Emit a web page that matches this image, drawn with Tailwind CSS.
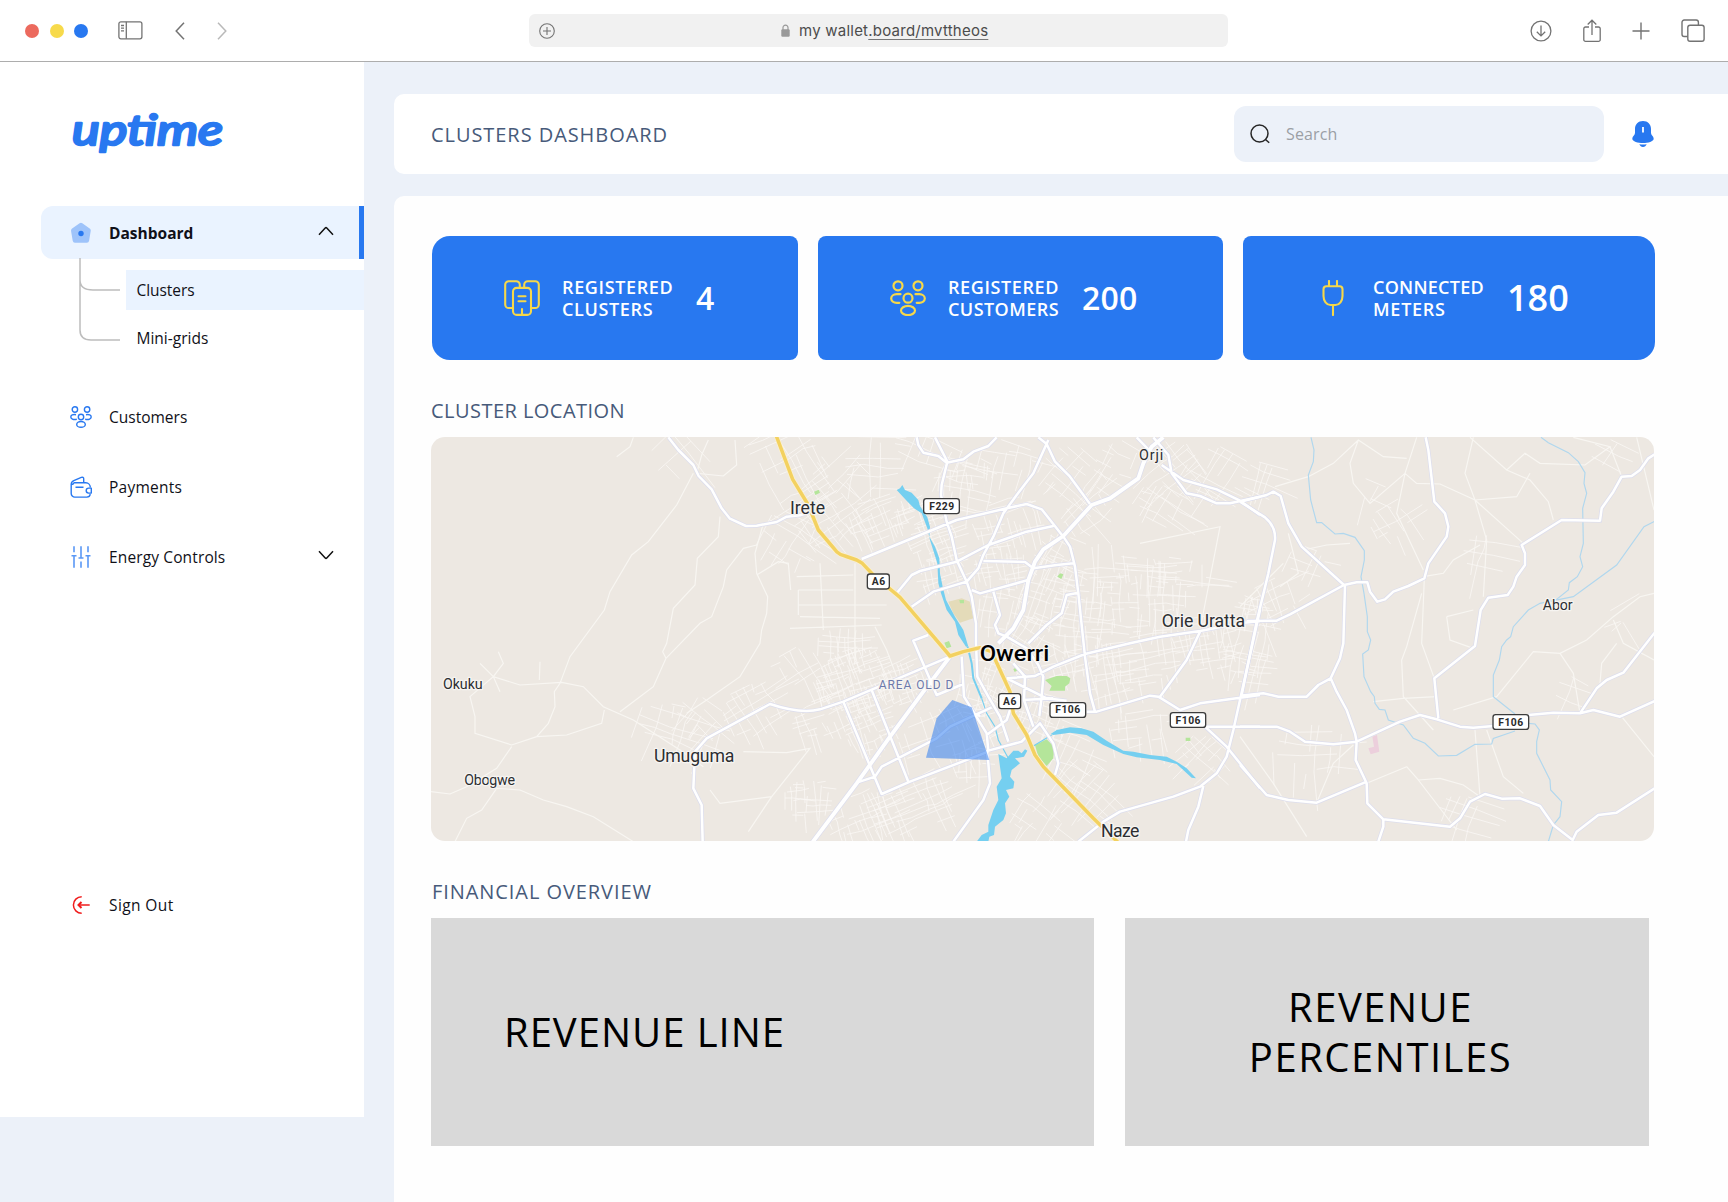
<!DOCTYPE html>
<html lang="en">
<head>
<meta charset="utf-8">
<title>Uptime – Clusters Dashboard</title>
<script src="https://cdn.jsdelivr.net/npm/@tailwindcss/browser@4"></script>
</head>
<body class="w-[1728px] h-[1202px] overflow-hidden flex flex-col bg-[#ecf1f9] font-['Open_Sans',sans-serif] text-[#101018]">

<!-- Browser toolbar -->
<header class="h-[62px] shrink-0 bg-white border-b border-[#adadad] flex items-center pl-[25px] pr-[23px] text-[#737373]">
  <div class="w-[504px] flex items-center">
    <span class="size-3.5 rounded-full bg-[#ec6a5e]"></span>
    <span class="size-3.5 rounded-full bg-[#f7da4b] ml-[10.5px]"></span>
    <span class="size-3.5 rounded-full bg-[#2878f0] ml-[10.5px]"></span>
    <svg class="ml-[30px]" width="25" height="19" viewBox="0 0 25 19" fill="none" stroke="currentColor" stroke-width="1.3"><rect x=".9" y=".8" width="23" height="17" rx="2"/><path d="M8.3.8v17M3 4.5h3M3 7.2h3M3 9.9h3"/></svg>
    <svg class="ml-8" width="10" height="18" viewBox="0 0 10 18" fill="none" stroke="currentColor" stroke-width="1.5"><path d="M9 .7 1.2 9 9 17.3"/></svg>
    <svg class="ml-8 text-[#b9b9b9]" width="10" height="18" viewBox="0 0 10 18" fill="none" stroke="currentColor" stroke-width="1.5"><path d="M1 .7 8.8 9 1 17.3"/></svg>
  </div>
  <div class="w-[699px] h-[33px] rounded-md bg-[#f1f1f1] flex items-center">
    <svg class="ml-2.5" width="16" height="16" viewBox="0 0 16 16" fill="none" stroke="currentColor" stroke-width="1.1"><circle cx="8" cy="8" r="7.3"/><path d="M8 4v8M4 8h8"/></svg>
    <svg class="ml-[226px]" width="9" height="13" viewBox="0 0 9 13"><rect x=".3" y="5.3" width="8.4" height="7.4" rx="1.2" fill="#999"/><path d="M2 6V3.6a2.5 2.5 0 0 1 5 0V6" fill="none" stroke="#999" stroke-width="1.2"/></svg>
    <span class="ml-[9px] font-[Inter,sans-serif] text-[15px] leading-5 tracking-[.23px] text-[#4c4c4c] whitespace-nowrap">my wallet<span class="underline underline-offset-[3px] decoration-[#777]">.board/mvttheos</span></span>
  </div>
  <div class="flex-1 flex items-center justify-end">
    <svg width="22" height="22" viewBox="0 0 22 22" fill="none" stroke="currentColor" stroke-width="1.3"><circle cx="11" cy="11" r="9.9"/><path d="M11 5.5v10.3M6.8 11.7l4.2 4.2 4.2-4.2"/></svg>
    <svg class="ml-[31px]" width="18" height="24" viewBox="0 0 18 24" fill="none" stroke="currentColor" stroke-width="1.3"><path d="M6 8H2.5A1.7 1.7 0 0 0 .8 9.700v11a1.700 1.700 0 0 0 1.700 1.700h13a1.700 1.700 0 0 0 1.700-1.700v-11A1.700 1.700 0 0 0 15.500 8H12M9 16V1.500M4.700 5.500 9 1.200l4.300 4.300"/></svg>
    <svg class="ml-[31px]" width="18" height="18" viewBox="0 0 18 18" fill="none" stroke="currentColor" stroke-width="1.4"><path d="M9 .5v17M.5 9h17"/></svg>
    <svg class="ml-[31px]" width="24" height="24" viewBox="0 0 24 24" fill="none" stroke="currentColor" stroke-width="1.4"><rect x="6.800" y="6.300" width="16.300" height="16" rx="2.200"/><path d="M6.800 17.500H3.200A2.200 2.200 0 0 1 1 15.300V3.200A2.200 2.200 0 0 1 3.200 1h12a2.200 2.200 0 0 1 2.200 2.200v3.100"/></svg>
  </div>
</header>

<div class="flex flex-1 min-h-0">
  <!-- Sidebar -->
  <aside class="w-[364px] h-[1055px] shrink-0 bg-white flex flex-col text-[15.5px] leading-6">
    <div class="h-36 pl-[66px] pt-8">
      <svg width="170" height="80" viewBox="0 0 170 80"><text x="6" y="51" textLength="151" lengthAdjust="spacingAndGlyphs" font-family="Lato, sans-serif" font-style="italic" font-weight="400" font-size="43" fill="#2878f0" stroke="#2878f0" stroke-width="2.600" stroke-linejoin="round" stroke-linecap="round">uptime</text></svg>
    </div>

    <a class="ml-[41px] h-[53px] rounded-l-xl bg-[#eaf3ff] border-r-[5px] border-[#2878f0] flex items-center pl-[29px] pr-[25px] font-bold">
      <svg width="22" height="22" viewBox="0 0 22 22"><path d="M9.600 1.200a2.300 2.300 0 0 1 2.700 0l7.400 5.300c.9.600 1.200 1.600 1 2.600l-1.600 9.700a2.300 2.300 0 0 1-2.300 1.900H5a2.300 2.300 0 0 1-2.300-1.900L1.100 9.200c-.2-1 .2-2 1-2.600z" fill="#9ec3fa"/><circle cx="11" cy="11.500" r="2.700" fill="#2878f0"/></svg>
      <span class="ml-[17px]">Dashboard</span>
      <svg class="ml-auto -mt-1" width="16" height="10" viewBox="0 0 16 10" fill="none" stroke="#111" stroke-width="1.500"><path d="M1 8.700 7.200 2q.8-.8 1.600 0L15 8.700"/></svg>
    </a>
    <div class="relative pt-[11px] flex flex-col">
      <svg class="absolute left-[79px] -top-1" width="42" height="90" viewBox="0 0 42 90" fill="none" stroke="#bdbdbd" stroke-width="1.500"><path d="M1 3v72q0 10 11 10h29M1 25q0 10 13 10h27"/></svg>
      <a class="ml-[126px] h-10 bg-[#eaf3ff] flex items-center pl-[10.5px] tracking-[-.05px]">Clusters</a>
      <a class="ml-[126px] mt-2 h-10 flex items-center pl-[10.5px]">Mini-grids</a>
    </div>

    <a class="mt-[31px] h-14 flex items-center pl-[70px]">
      <svg width="22" height="22" viewBox="0 0 22 22" fill="none" stroke="#2878f0" stroke-width="1.400"><circle cx="4.900" cy="3.500" r="2.700"/><circle cx="17.100" cy="3.500" r="2.700"/><circle cx="11" cy="11" r="2.700"/><ellipse cx="11" cy="18.400" rx="4.300" ry="2.900"/><path d="M6 8.700C3 8 .8 9.300.8 11s2.200 3 6 2.300M16 8.700c3-.7 5.200.6 5.200 2.300s-2.200 3-6 2.300"/></svg>
      <span class="ml-[17px]">Customers</span>
    </a>
    <a class="mt-3.5 h-14 flex items-center pl-[70px]">
      <svg width="22" height="22" viewBox="0 0 22 22" fill="none" stroke="#2878f0" stroke-width="1.400" stroke-linejoin="round"><path d="M1.200 8.500v9a3.600 3.600 0 0 0 3.600 3.600h12a3.600 3.600 0 0 0 3.500-3M20.300 11.300a4.500 4.500 0 0 0-4.400-4.500H4A2.700 2.700 0 0 1 1.200 8.500c0-2.500 1-3.200 2.600-3.900L11.300 1.400c1.300-.5 2.400 0 2.400 1.300v4M21.300 12.100h-2.600a2.300 2.300 0 0 0 0 5h2.600zM5.500 11.200h8"/></svg>
      <span class="ml-[17px] tracking-[.25px]">Payments</span>
    </a>
    <a class="mt-3.5 h-14 flex items-center pl-[70px] pr-[30px]">
      <svg width="22" height="22" viewBox="0 0 22 22" fill="none" stroke="#5a98f5" stroke-width="1.600"><path d="M4 .3v6M4 10v11.700M1.500 9.800h5M11 .3v11.400M11 15.500v6.200M8.500 12h5M18 .3v6M18 10v11.700M15.500 9.800h5"/></svg>
      <span class="ml-[17px] tracking-[.13px]">Energy Controls</span>
      <svg class="ml-auto -mt-1" width="16" height="10" viewBox="0 0 16 10" fill="none" stroke="#111" stroke-width="1.500"><path d="M1 1.300 7.200 8q.8.800 1.600 0L15 1.300"/></svg>
    </a>
    <a class="mt-[292px] h-14 flex items-center pl-[70px]">
      <svg width="22" height="22" viewBox="0 0 22 22" fill="none" stroke="#f01c1c" stroke-width="1.500"><path d="M11.700 2.700a8.300 8.300 0 1 0 0 16.600M19.700 11H9"/><path d="m11.500 8-3 3 3 3" stroke-width="2"/></svg>
      <span class="ml-[17px] tracking-[.4px]">Sign Out</span>
    </a>
  </aside>

  <!-- Content -->
  <main class="flex-1 min-w-0 pl-[30px] pt-8 flex flex-col">
    <div class="h-20 shrink-0 rounded-l-[10px] bg-white flex items-center pl-[37px]">
      <h1 class="pt-px text-xl tracking-[.94px] text-[#475a7a]">CLUSTERS DASHBOARD</h1>
      <label class="ml-auto w-[370px] h-14 rounded-xl bg-[#ecf1f9] flex items-center pl-4 text-base text-[#9b9fa5]">
        <svg width="20" height="20" viewBox="0 0 20 20" fill="none" stroke="#262626" stroke-width="1.500"><circle cx="9.500" cy="9.500" r="8.500"/><path d="m15.500 15.500 3.700 3.300"/></svg>
        <span class="ml-4 tracking-[.15px]">Search</span>
      </label>
      <svg class="ml-7 mr-[74px]" width="22" height="26" viewBox="0 0 22 26"><path d="M11 0c4.800 0 8 3.500 8 8v4c0 2 2.700 3.200 2.700 5.700C21.700 20.500 16 22 11 22S.3 20.500.3 17.700C.3 15.200 3 14 3 12V8c0-4.500 3.200-8 8-8zM7.300 23.300q3.700.5 7.400 0C14 24.800 12.700 26 11 26s-3-1.200-3.700-2.700z" fill="#2878f0"/><path d="M11 6v5.500" stroke="#fff" stroke-width="1.800"/></svg>
    </div>

    <section class="mt-[22px] flex-1 rounded-tl-[10px] bg-[#fefefe] pl-[37px] pt-10">
      <div class="flex gap-5 ml-px text-white font-semibold">
        <div class="w-[366px] h-[124px] rounded-lg rounded-l-[18px] bg-[#2878f0] flex items-center pl-[72px]">
          <svg width="36" height="36" viewBox="0 0 36 36" fill="none" stroke="#f6d84a" stroke-width="2.100" stroke-linecap="round"><path d="M8.500 28H4.800A3.600 3.600 0 0 1 1.200 24.400V4.800A3.600 3.600 0 0 1 4.800 1.200h7.400a3.600 3.600 0 0 1 3.600 3.600v2.900M27.500 28h3.700a3.600 3.600 0 0 0 3.600-3.600V4.800a3.600 3.600 0 0 0-3.600-3.600h-7.400a3.600 3.600 0 0 0-3.600 3.600v2.900"/><rect x="9" y="7.900" width="18" height="27" rx="3.600"/><path d="M14.500 16.300h7M14.500 21.300h7M18 29v5.500"/></svg>
          <p class="ml-[22px] w-[112px] text-lg leading-[22px] tracking-[.64px]">REGISTERED<br>CLUSTERS</p>
          <span class="ml-[22px] text-[32px]">4</span>
        </div>
        <div class="w-[405px] h-[124px] rounded-lg bg-[#2878f0] flex items-center pl-[72px]">
          <svg width="36" height="36" viewBox="0 0 36 36" fill="none" stroke="#f6d84a" stroke-width="2.200" stroke-linecap="round"><circle cx="8" cy="5.800" r="4.500"/><circle cx="28" cy="5.800" r="4.500"/><circle cx="18" cy="18.200" r="4.500"/><ellipse cx="18" cy="30.500" rx="7" ry="4.600"/><path d="M10.500 14.200H6.700c-3.400 0-5.500 2-5.500 4.400s2.500 4.200 5.500 4.200h2.600M25.500 14.200h3.800c3.400 0 5.500 2 5.500 4.400s-2.500 4.200-5.500 4.200h-2.600"/></svg>
          <p class="ml-[22px] w-[112px] text-lg leading-[22px] tracking-[.6px]">REGISTERED<br><span class="tracking-[.44px]">CUSTOMERS</span></p>
          <span class="ml-[22px] text-[32px] tracking-[.25px]">200</span>
        </div>
        <div class="w-[412px] h-[124px] rounded-lg rounded-r-[18px] bg-[#2878f0] flex items-center pl-[72px]">
          <svg width="36" height="36" viewBox="0 0 36 36" fill="none" stroke="#f6d84a" stroke-width="2.100" stroke-linecap="round"><path d="M14 1v5M22 1v5M18 25v10"/><path d="M11.500 6.200h13a3 3 0 0 1 3 3V16c0 5-3 9-7 9h-5c-4 0-7-4-7-9V9.200a3 3 0 0 1 3-3z"/></svg>
          <p class="ml-[22px] w-[112px] text-lg leading-[22px] tracking-[.26px]">CONNECTED<br><span class="tracking-[.75px]">METERS</span></p>
          <span class="ml-[22px] text-[36px]">180</span>
        </div>
      </div>

      <h2 class="mt-[37px] h-7 leading-7 text-xl tracking-[.46px] text-[#475a7a]">CLUSTER LOCATION</h2>

      <!-- Map; shapes are drawn on a triple-resolution canvas -->
      <svg id="map" class="mt-3 w-[1223px] h-[404px] rounded-[14px] bg-[#ede8e2]" viewBox="33 21 3669 1212">
        <defs>
          <g id="roads">
            <path d="M745 22 775 60 820 105 836 138 875 178 905 235 930 266 978 288 1010 287 1070 276 1100 260 1140 256 1175 245M1590 680 1270 815 1200 838C1160 848 1110 842 1050 822L860 925 825 965 820 1075 845 1125 848 1235"/>
            <g transform="translate(1260)"><path d="M10 815 125 1092 210 1055 445 965M95 780 205 1055M50 1058 105 1040 125 1010 290 925 330 890 455 832M265 615 220 632 290 795 370 762M285 22 322 95 305 165 303 195 320 275 335 320 350 390 380 455 395 500 408 580 408 640 412 740 445 800 480 860 505 935M230 22 235 45 250 68 295 78 320 98 370 88 400 65 445 48 470 22M65 387 350 270 500 235 560 222 605 238 670 320 690 350 705 410 715 490 735 680 750 790 765 845M170 490 215 435 240 423 350 395 445 345 560 305 640 288M215 530 280 485 380 455 415 415 430 375 460 320 490 250 530 195 580 130 625 30M595 22 620 42 645 95 690 140 750 222M430 393 555 396 580 415 650 405 700 400M395 480 420 490 565 450M460 485 480 555 465 585 475 610 500 620 560 655 595 705 610 740 605 800 598 858M565 640 620 585 665 550 680 495 715 488M500 745 585 738 640 710 735 672 870 640 960 620 1080 603 1200 580 1260 573M1080 605 1040 690 960 800M740 845 770 845 930 797 955 800 1020 840 1080 820 1260 795M940 22 985 75 995 130 1040 190 1080 198 1130 220 1170 220 1260 200M965 105 1030 150 1130 178 1200 212 1260 255M1095 890 1160 950 1260 1075M1095 890H1260M890 22 925 58M1260 540 1220 720 1180 900 1160 980 1130 1030 1080 1070 1000 1100 840 1145 790 1175 715 1235M1090 1068 1075 1130 1045 1200 1038 1235M440 960 445 1000 450 1060 430 1110 340 1235M365 680 372 800 440 910 445 962 545 935 600 880 640 940 655 1000 645 1035M500 745 620 805 680 812M550 810 640 805M440 915 500 870 510 840M520 700 555 740 552 810 580 890M420 860 410 850"/></g>
            <g transform="translate(2460)"><path d="M0 215 80 195 100 185 122 198 145 280 185 350 312 465 350 457 382 457 390 485 412 515 435 508 460 485 505 468 553 445 565 400 620 320 625 290 615 250 583 215 565 60 557 22M0 215 75 262Q108 290 105 330L85 430 50 575 5 795M20 573 110 572 150 553 312 465M315 465 310 640 300 685 272 745 290 785 320 840 345 910 350 935 347 990 380 1060 382 1120 430 1168 430 1190 415 1235M0 797 70 790 115 800 200 800 235 765 272 745M0 890H110L150 905 195 935 280 943 350 935 480 875 540 855 590 868 660 890 700 893 760 888M595 865 583 745 705 648 722 540 745 503 803 495 820 470 830 440 855 405 855 370 845 345 965 270 1080 272 1085 235 1120 185 1145 140 1175 138 1200 120 1225 85 1244 73M865 855 940 848 1020 850 1060 840 1140 860 1244 813M1020 850 1070 775 1100 750 1150 728 1244 608M0 1005 80 1095 145 1110 230 1118 375 1057M430 1168 630 1190 660 1165 690 1115 735 1092 785 1106 840 1105 900 1128 940 1185 998 1230 1010 1205 1075 1155 1130 1148 1244 1075"/></g>
          </g>
          <g id="avenues"><path d="M1175 1240 1310 1060 1410 920 1510 785 1590 680M2230 22 2195 50 2170 100 2155 145 2070 205 2015 225 1930 318 1870 358 1845 395 1825 450 1810 540 1780 595 1735 640"/></g>
        </defs>
        <!-- Streets -->
        <g id="streets" fill="none" stroke="#faf8f5" stroke-width="3" stroke-opacity=".8"></g>
        <g fill="none" stroke="#f8f6f2" stroke-width="3.500">
          <path d="M820 130 770 225 685 335 635 375 570 485 553 540 450 680 420 760 403 785 405 830 385 880 350 920 275 945 165 910 165 860 150 800 220 740 300 765 425 757 490 770 550 830 640 870 780 960 850 1010M350 920 440 915 545 880 553 840M865 30 845 75 830 130 910 138 950 105 945 30M900 260 895 320 832 385 825 465 760 535 740 640 728 665 738 685 840 580 875 560 910 470 920 420 970 355 1010 345M738 685 700 770 640 815 600 845M1030 280 1005 370 1010 430 1043 500 1040 550 1025 600 1020 640 960 740 860 810 800 850M1010 435 1075 395 1105 400 1112 480M1130 440 1300 435M1135 480H1300M1135 525H1400M1140 560 1380 565M1135 480V555M1110 595 1385 585M1200 400 1210 600M1305 400V690M1365 590 1400 660 1430 740M33 1085 90 1092 140 1070 230 1015 275 950M230 1075 300 1080 370 1110 440 1130 520 1160 640 1235M230 1075 185 1140 140 1165 105 1235M640 22 630 50 590 80M180 700 220 740M235 665 250 700 220 740 240 785M360 695 358 750M970 965 1100 968 1170 955 1055 1100 900 1120 870 1080M1055 1100 985 1205"/>
          <g transform="translate(2460)"><path d="M0 530 130 400M-300 340-60 290-120 600M105 170 205 140 280 100 355 30 400 60 430 80 500 85M530 22 495 130 470 250 550 420M495 130 530 160 600 162 705 210 850 340M700 22 675 130 705 210 740 330 730 500M690 22 800 120 855 70 900 100 1035 105 1110 50 1000 22M1110 50 1145 140M800 120 870 150 925 215 940 270M705 210 830 200 870 130M355 30 330 100 340 160 390 220 495 130M553 445 545 640 583 745M545 490 500 650 485 690 490 800 580 900M550 440 610 430 640 390 720 345M1242 490 1200 500 1120 560 1040 630 960 670 880 665 770 800 640 840M1120 570 1150 640 1242 690M1130 640 1085 700 1080 760M960 670 1000 730 1020 850M1190 22 1242 240M400 815 490 805 590 800M500 1010 535 1050 600 1045 670 1065 720 1100 705 900M740 900 790 1040 850 1090M535 1050 650 1200M380 1060 500 1010M0 920 100 1060 200 1220M230 1118 280 1000 340 945M620 560 700 540M620 560 630 630 700 655M1145 860 1242 980M145 310 175 430 120 470M190 360 260 345 330 340"/></g>
        </g>
        <!-- Landcover -->
        <g transform="translate(1260)">
          <path d="M325 515 365 505 390 515 400 565 360 578 340 550Z" fill="#e4dbb9"/>
          <path d="M615 750 650 738H680L691 745 688 760 675 770V782H628L635 768ZM585 945 620 928 642 950 640 985 620 1008 595 980ZM652 440 660 430 670 433 664 447ZM358 510H372V520H360ZM313 638 327 633 334 650 320 655ZM-78 185-64 179-60 188-74 195ZM520 717 532 711 535 719 524 726ZM1037 923H1051V933H1037Z" fill="#b4e59a"/>
        </g>
        <path d="M2857 920 2871 915 2878 965 2852 973 2845 955 2862 950Z" fill="#eccfdc"/>
        <!-- Water -->
        <g transform="translate(2460)" fill="none" stroke="#b0d7ee" stroke-width="3.500">
          <path d="M213 22 222 60 220 95 205 135 212 210 230 278 245 278 285 312 310 310 345 322 373 362V390L363 440 372 490 382 560V605L392 630 385 660 368 672 372 740 392 785 403 800 405 820 418 838 435 840 445 870 490 885 520 925 555 940 595 978 650 976 705 943 755 942 760 925 825 903M903 22 925 38 985 68 1015 95 1035 128 1032 160 1040 190 1028 235 1030 340 1020 380 1028 410 1012 440 988 458 985 480 945 512M1244 274 1212 290 1130 405 1000 500 900 520 865 540 820 590 812 620 800 630 785 650 778 690 760 735V800L825 852M865 880 885 882 898 900 890 935V970L930 1050 932 1080 965 1115 960 1160 940 1185 925 1235"/>
        </g>
        <g transform="translate(1260)" fill="#75cff0">
          <path d="M170 180 180 175 187 165 195 180 215 188 235 210 240 228 262 262 270 290 268 320 285 350 298 385 300 430 308 470 318 510 345 560 370 600 385 650H378L355 615 345 575 320 540 303 490 295 460 292 400 270 330 262 295 245 250 222 235 200 212ZM475 972 500 985 520 962 535 962 545 970 555 958 562 962 552 980 525 985 540 1000 515 1020 510 1040 523 1055 520 1075 498 1080 508 1100 495 1120 498 1150 490 1170 465 1190 462 1215 448 1220 445 1235H410L425 1215 445 1205V1185L460 1140 475 1110 470 1070 485 1045 480 1010ZM632 912 650 900 690 892 725 895 760 905 800 932 850 962 880 965 930 975 980 980 1010 995 1040 1015 1068 1045 1055 1043 1010 1002 960 990 890 982 850 972 790 945 740 915 690 908 640 915Z"/>
          <path d="M383 650 395 700 400 745 425 805" fill="none" stroke="#75cff0" stroke-width="6"/>
          <path d="M425 805 440 850 465 890 475 930 505 985M580 948 635 915" fill="none" stroke="#75cff0" stroke-width="3.500"/>
        </g>
        <!-- Roads -->
        <use href="#roads" fill="none" stroke="#dddeed" stroke-width="12"/>
        <use href="#avenues" fill="none" stroke="#dddeed" stroke-width="16"/>
        <use href="#roads" fill="none" stroke="#fff" stroke-width="7.500" stroke-linejoin="round"/>
        <use href="#avenues" fill="none" stroke="#fff" stroke-width="11.500" stroke-linejoin="round"/>
        <path d="M1069 18 1118 148 1165 225 1195 300 1250 365Q1262 376 1275 378L1310 390 1327 400 1360 435 1440 502 1590 678 1630 665 1680 653 1715 665 1770 785 1780 850 1820 915 1845 975 1870 1010 2020 1165 2095 1238" fill="none" stroke="#fbf0cf" stroke-width="15"/>
        <path d="M1069 18 1118 148 1165 225 1195 300 1250 365Q1262 376 1275 378L1310 390 1327 400 1360 435 1440 502 1590 678 1630 665 1680 653 1715 665 1770 785 1780 850 1820 915 1845 975 1870 1010 2020 1165 2095 1238" fill="none" stroke="#f3d160" stroke-width="10.500" stroke-linejoin="round"/>
        <path d="M1597 810 1655 832 1708 990 1518 983 1550 865Z" fill="#2878f0" fill-opacity=".52"/>
        <!-- Place names -->
        <g font-family="Roboto, sans-serif" fill="#2c2e31" stroke="#f6f4f1" stroke-width="8" stroke-linejoin="round" paint-order="stroke">
          <g font-size="53"><text x="1110" y="252" textLength="105">Irete</text><text x="702" y="997" textLength="241">Umuguma</text><text x="2225" y="590" textLength="250">Orie Uratta</text><text x="2043" y="1220" textLength="115">Naze</text></g>
          <g font-size="43"><text x="69" y="776" textLength="119">Okuku</text><text x="133" y="1064" textLength="152">Obogwe</text><text x="2157" y="91" textLength="73">Orji</text><text x="3368" y="540" textLength="90">Abor</text></g>
          <text x="1376" y="777" textLength="224" font-size="36" fill="#6d79ab">AREA OLD D</text>
          <text x="1679" y="692" textLength="209" font-size="68" font-weight="500" fill="#000" lengthAdjust="spacingAndGlyphs">Owerri</text>
        </g>
        <!-- Route shields -->
        <g fill="#fff" stroke="#3c3c3c" stroke-width="4">
          <rect x="1342" y="432" width="66" height="45" rx="8"/><rect x="1511" y="206" width="107" height="45" rx="8"/><rect x="1736" y="791" width="66" height="45" rx="8"/><rect x="1890" y="818" width="107" height="44" rx="8"/><rect x="2251" y="848" width="106" height="44" rx="8"/><rect x="3219" y="854" width="107" height="44" rx="8"/>
        </g>
        <g font-family="Roboto, sans-serif" font-weight="700" font-size="31" fill="#2a2a2a" text-anchor="middle" letter-spacing="1.500">
          <text x="1376" y="465">A6</text><text x="1566" y="239">F229</text><text x="1770" y="824">A6</text><text x="1944" y="850">F106</text><text x="2305" y="881">F106</text><text x="3273" y="887">F106</text>
        </g>
      </svg>

      <h2 class="mt-[37px] h-7 leading-7 text-xl tracking-[.93px] text-[#475a7a] pl-px">FINANCIAL OVERVIEW</h2>
      <div class="mt-3 flex gap-[31px] text-[40px] leading-[50px] text-black">
        <div class="w-[663px] h-[228px] bg-[#d9d9d9] flex items-center pl-[73px] tracking-[.98px]">REVENUE LINE</div>
        <div class="w-[524px] h-[228px] bg-[#d9d9d9] flex items-center justify-center text-center pr-[13px] tracking-[1.5px]"><p>REVENUE<br>PERCENTILES</p></div>
      </div>
    </section>
  </main>
</div>

<script>
  // Fills the built-up areas with short, slightly irregular street segments.
  let seed = 7;
  const rnd = () => (seed = (seed * 16807) % 2147483647) / 2147483647;
  // [centre x, centre y, width, height, angle, spacing]
  const areas = [
    [1120,110,300,180,60,30],[1230,270,190,150,-35,22],[1110,320,160,150,30,26],[1370,270,180,130,-22,17],[1340,100,130,160,0,36],
    [1300,750,230,180,-20,12],[1240,850,260,110,-20,19],[1000,840,190,150,-30,22],[1140,720,130,120,60,26],[1270,640,150,90,0,17],
    [1160,1110,130,120,0,17],[1330,1160,230,130,-20,19],[1480,1130,260,150,-22,22],[780,900,260,130,20,28],[1350,900,150,120,-22,14],
    [1530,60,220,120,20,26],[1650,170,160,170,10,26],[1760,280,200,130,-15,20],[1540,330,150,120,-20,15],[1560,430,150,90,-15,18],
    [1740,410,160,120,-10,19],[1730,540,110,130,10,20],[1880,490,150,220,20,18],[1830,620,120,120,30,20],[1990,560,180,260,5,19],
    [2060,730,190,180,-10,19],[1740,740,110,150,25,17],[1660,770,90,160,10,19],[1900,690,130,100,-15,19],[1870,860,150,130,20,19],
    [1560,920,240,160,-22,24],[1690,880,120,120,-20,20],[2180,500,210,230,0,19],[2180,690,200,150,-10,22],[2350,640,180,160,-10,19],
    [2280,450,200,130,5,26],[1960,140,200,160,40,24],[2090,110,130,150,30,26],[2260,120,180,160,50,24],[2390,130,160,150,30,26],
    [2000,1080,210,160,40,24],[1850,1160,160,130,35,24],[1950,970,200,100,25,24],[2160,900,180,110,-10,24],[2350,980,130,120,45,22],
    [2480,620,140,240,10,20],[2560,520,170,130,-25,28],[2660,400,110,90,20,28],[2520,150,110,100,20,28],[2500,730,90,130,10,26],
    [2680,960,220,150,0,34],[2840,190,90,80,20,28],[2910,280,110,100,-30,24],[3190,370,120,110,10,30],[3120,1150,130,100,20,30],
    [3460,790,110,90,20,30],[3610,560,130,70,-30,30],[3570,80,120,90,30,30],[770,70,120,110,50,34],[1900,380,110,150,30,22],
    [1600,150,120,60,0,20],[2000,250,130,120,-40,26],[1660,1010,120,100,0,24],[1250,120,120,170,45,30],[2050,400,120,120,0,30],
    [1440,760,140,120,-22,16],[1480,260,140,90,-20,18],[1760,90,160,110,15,24],[2230,230,160,110,30,28],[830,860,120,110,40,24]
  ];
  let d = '';
  for (const [cx, cy, w, h, deg, step] of areas) {
    const a = deg * Math.PI / 180, c = Math.cos(a), s = Math.sin(a);
    const pt = (x, y) => (cx + x * c - y * s).toFixed(0) + ' ' + (cy + x * s + y * c).toFixed(0);
    for (const vertical of [false, true]) {
      const across = vertical ? w : h, along = vertical ? h : w;
      for (let o = -across / 2; o < across / 2; o += step * (0.6 + rnd() * 0.75)) {
        const edge = Math.sqrt(Math.max(0.15, 1 - Math.pow(2 * o / across, 2)));
        let t = -along / 2 * edge, off = o;
        while (t < along / 2 * edge) {
          const len = step * (1 + rnd() * 3), off2 = off + (rnd() - 0.5) * step * 0.7;
          if (rnd() > 0.36) d += vertical ? `M${pt(off, t)}L${pt(off2, t + len)}` : `M${pt(t, off)}L${pt(t + len, off2)}`;
          off = off2; t += len;
        }
      }
    }
  }
  const streets = document.createElementNS('http://www.w3.org/2000/svg', 'path');
  streets.setAttribute('d', d);
  document.getElementById('streets').append(streets);
</script>
</body>
</html>
